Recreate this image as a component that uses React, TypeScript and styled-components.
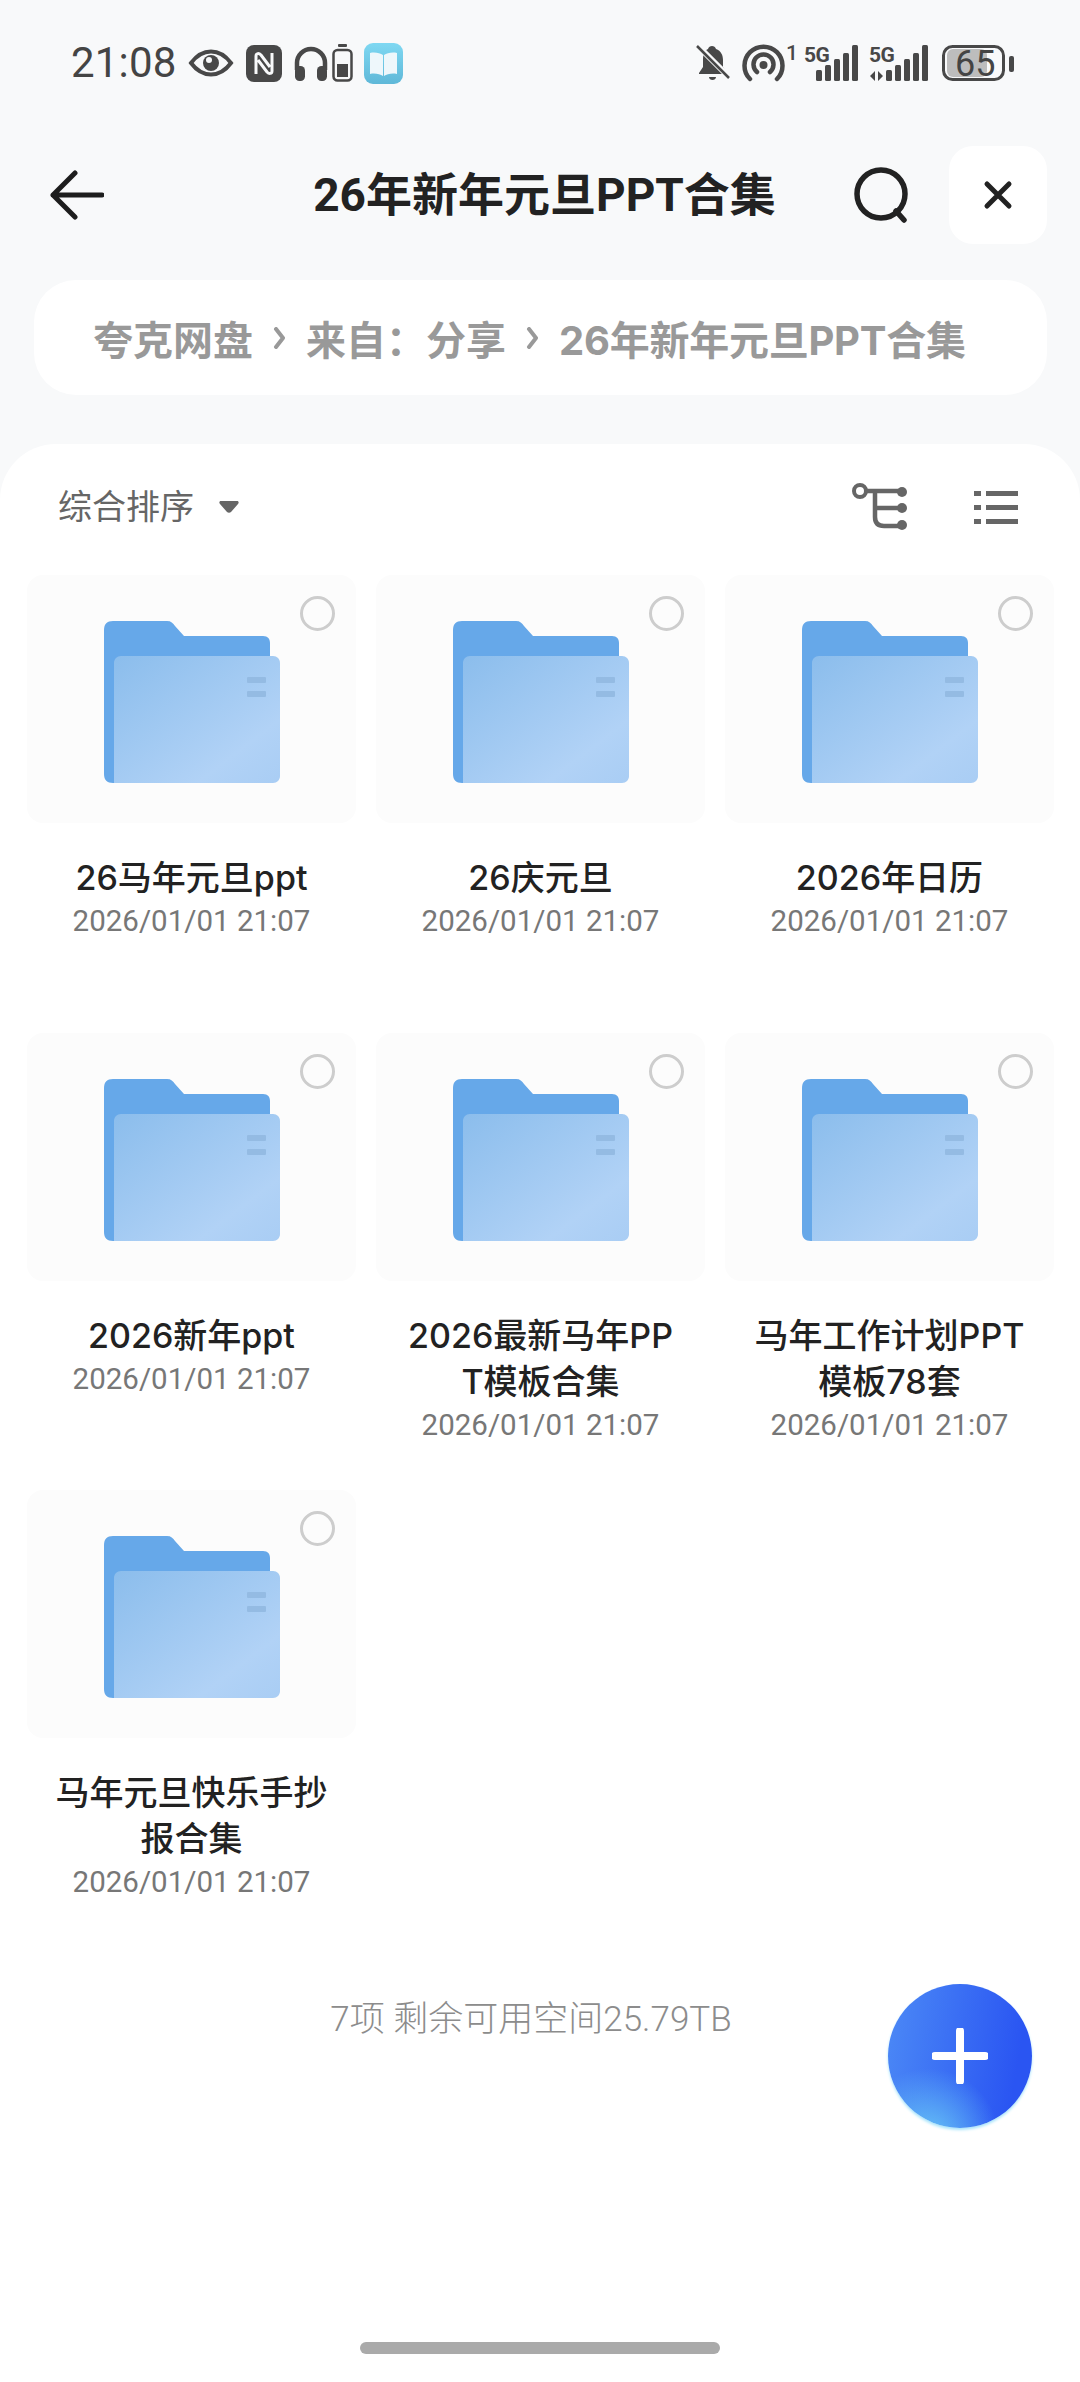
import React from "react";
import styled, { createGlobalStyle } from "styled-components";

const Global = createGlobalStyle`
  html, body { margin: 0; padding: 0; background: #f8f9fa; }
  * { box-sizing: border-box; }
`;

const Page = styled.div`
  position: relative;
  width: 1080px;
  height: 2382px;
  display: flex;
  flex-direction: column;
  overflow: hidden;
  background: #f8f9fa;
  font-family: Roboto, "Noto Sans CJK SC", sans-serif;
`;

const StatusBar = styled.div`
  height: 126px;
  flex: none;
  display: flex;
  align-items: center;
  justify-content: space-between;
  padding: 0 66px 0 71px;
`;

const StatusGroup = styled.div`
  display: flex;
  align-items: center;
`;

const Clock = styled.span`
  font-size: 42px;
  line-height: 48px;
  color: #444;
  letter-spacing: 0.2px;
`;

const StatusIcon = styled.svg<{ $gap?: number }>`
  display: block;
  flex: none;
  overflow: visible;
  margin-left: ${(p) => p.$gap ?? 0}px;
  color: #484848;
`;

const Header = styled.div`
  height: 98px;
  margin-top: 20px;
  flex: none;
  display: grid;
  grid-template-columns: 1fr auto 1fr;
  align-items: center;
  padding: 0 33px 0 42px;
`;

const BackButton = styled.div`
  margin-left: 8px;
  display: flex;
  color: #1d1d1d;
`;

const Title = styled.div`
  font-size: 46px;
  line-height: 60px;
  font-weight: 700;
  color: #222;
  white-space: nowrap;
`;

const HeaderActions = styled.div`
  display: flex;
  justify-content: flex-end;
  align-items: center;
  gap: 39px;
  color: #222;
`;

const CloseButton = styled.div`
  width: 98px;
  height: 98px;
  border-radius: 24px;
  background: #fff;
  display: flex;
  align-items: center;
  justify-content: center;
`;

const Breadcrumb = styled.div`
  height: 115px;
  flex: none;
  margin: 36px 33px 0 34px;
  padding-left: 59px;
  border-radius: 42px;
  background: #fff;
  display: flex;
  align-items: center;
  gap: 20px;
  font-size: 40px;
  font-weight: 700;
  color: #999;
  white-space: nowrap;
`;

const LatinMix = styled.span`
  font-family: Inter, "Noto Sans CJK SC", sans-serif;
  letter-spacing: -0.25px;
`;

const Chevron = styled.svg`
  flex: none;
  color: #999;
`;

const Panel = styled.div`
  flex: 1;
  margin-top: 49px;
  background: #fff;
  border-radius: 56px 56px 0 0;
  display: flex;
  flex-direction: column;
`;

const SortRow = styled.div`
  height: 131px;
  flex: none;
  padding: 0 62px 6px 58px;
  display: flex;
  align-items: center;
  justify-content: space-between;
  color: #666;
`;

const SortLabel = styled.div`
  display: flex;
  align-items: center;
  gap: 25px;
  font-size: 34px;
  line-height: 46px;
  color: #666;
`;

const ViewTools = styled.div`
  display: flex;
  align-items: center;
  gap: 66px;
`;

const Grid = styled.div`
  display: grid;
  grid-template-columns: repeat(3, 329px);
  grid-auto-rows: 457.5px;
  column-gap: 20px;
  padding: 0 0 0 27px;
`;

const Cell = styled.div`
  display: flex;
  flex-direction: column;
  align-items: center;
`;

const Thumb = styled.div`
  position: relative;
  width: 100%;
  height: 248px;
  padding-top: 46px;
  border-radius: 16px;
  background: #fcfcfc;
  display: flex;
  justify-content: center;
`;

const Radio = styled.span`
  position: absolute;
  top: 21px;
  right: 21px;
  width: 35px;
  height: 35px;
  border-radius: 50%;
  border: 3px solid #cdcdcd;
`;

const Name = styled.div`
  width: 275px;
  margin-top: 32px;
  font-family: Inter, "Noto Sans CJK SC", sans-serif;
  font-size: 34px;
  line-height: 46px;
  font-weight: 500;
  color: #222;
  text-align: center;
  word-break: break-all;
`;

const DateText = styled.div`
  margin-top: -2px;
  font-size: 29.500px;
  line-height: 44px;
  color: #777;
  white-space: nowrap;
`;

const Summary = styled.div`
  margin-top: 49px;
  padding-right: 18px;
  text-align: center;
  font-size: 35px;
  line-height: 46px;
  font-weight: 300;
  color: #8c8c8c;
`;

const Fab = styled.div`
  position: absolute;
  left: 888px;
  top: 1984px;
  width: 144px;
  height: 144px;
  border-radius: 50%;
  display: flex;
  align-items: center;
  justify-content: center;
  background:
    radial-gradient(circle at 28% 108%, #68c6f6 0%, rgba(104, 198, 246, 0) 38%),
    linear-gradient(100deg, #4c8af6 0%, #2a55f2 85%);
  box-shadow: 0 2px 3px #a7e4fb;
`;

const HomeBar = styled.div`
  width: 360px;
  height: 12px;
  flex: none;
  margin: auto auto 28px;
  border-radius: 6px;
  background: #aaa;
`;

const FolderIcon = () => {
  const id = React.useId();
  return (
    <svg width="176" height="162" viewBox="0 0 176 162">
      <defs>
        <linearGradient id={id} x1="0" y1="0" x2="1" y2="1">
          <stop offset="0" stopColor="#8bbdec" />
          <stop offset="0.75" stopColor="#b1d2f6" />
          <stop offset="1" stopColor="#a9cdf4" />
        </linearGradient>
      </defs>
      <path
        d="M9 0h54c4 0 6 2 8 5l9 10h79c5 0 7 3 7 7v120c0 12-2 20-10 20H9c-6 0-9-3-9-9V9C0 3 3 0 9 0z"
        fill="#66a8e9"
      />
      <path d="M17 35h152c4 0 7 3 7 7v113c0 4-3 7-7 7H10V42c0-4 3-7 7-7z" fill={`url(#${id})`} />
      <rect x="143" y="56" width="19" height="6" rx="1" fill="#94bbe3" />
      <rect x="143" y="70" width="19" height="6" rx="1" fill="#94bbe3" />
    </svg>
  );
};

const items = [
  "26马年元旦ppt",
  "26庆元旦",
  "2026年日历",
  "2026新年ppt",
  "2026最新马年PPT模板合集",
  "马年工作计划PPT模板78套",
  "马年元旦快乐手抄报合集",
];

const Sep = () => (
  <Chevron width="13" height="22" viewBox="0 0 13 22">
    <path d="M3 2l7 9-7 9" fill="none" stroke="currentColor" strokeWidth="4" strokeLinecap="round" strokeLinejoin="round" />
  </Chevron>
);

const Signal = ({ x }: { x: number }) => (
  <g fill="currentColor">
    {[
      [0, 25, 11],
      [9, 20, 16],
      [18, 14, 22],
      [27, 8, 28],
      [36, 0, 36],
    ].map(([dx, y, h]) => (
      <rect key={dx} x={x + dx} y={y} width="6" height={h} rx="1.5" />
    ))}
  </g>
);

export default function App() {
  return (
    <Page>
      <Global />
      <StatusBar>
        <StatusGroup>
          <Clock>21:08</Clock>
          <StatusIcon $gap={12} width="44" height="28" viewBox="0 0 44 28" fill="none">
            <path d="M2 14C8 6 14 2.500 22 2.500S36 6 42 14c-6 8-12 11.500-20 11.500S8 22 2 14z" stroke="currentColor" strokeWidth="4" />
            <circle cx="22" cy="14" r="8" fill="currentColor" />
            <circle cx="20" cy="11" r="3" fill="#f8f9fa" />
          </StatusIcon>
          <StatusIcon $gap={13} width="36" height="37" viewBox="0 0 36 37">
            <rect width="36" height="37" rx="8" fill="currentColor" />
            <path d="M10 29V11c0-3 3-3 5-1l9 12M26 8v18c0 3-3 3-5 1l-9-12" fill="none" stroke="#f8f9fa" strokeWidth="3" />
          </StatusIcon>
          <StatusIcon $gap={12} width="34" height="35" viewBox="0 0 34 35" fill="none">
            <path d="M3 24V17a14 14 0 0 1 28 0v7" stroke="currentColor" strokeWidth="4.500" />
            <rect x="1" y="20" width="10" height="15" rx="4.500" fill="currentColor" />
            <rect x="23" y="20" width="10" height="15" rx="4.500" fill="currentColor" />
          </StatusIcon>
          <StatusIcon $gap={4} width="21" height="38" viewBox="0 0 21 38" fill="none">
            <rect x="6" y="0" width="9" height="3" rx="1" fill="currentColor" />
            <rect x="1.500" y="6" width="18" height="30.500" rx="4" stroke="currentColor" strokeWidth="2.500" />
            <rect x="5" y="20" width="11" height="13" fill="currentColor" />
          </StatusIcon>
          <StatusIcon $gap={11} width="39" height="41" viewBox="0 0 39 41">
            <defs>
              <linearGradient id="bookBg" x1="0" y1="0" x2="0" y2="1">
                <stop offset="0" stopColor="#7fd8f2" />
                <stop offset="1" stopColor="#5fb8d8" />
              </linearGradient>
            </defs>
            <rect width="39" height="41" rx="9" fill="url(#bookBg)" />
            <path d="M6 10c5-1 10 0 13 2v21c-3-2-8-3-13-2zM33 10c-5-1-10 0-13 2v21c3-2 8-3 13-2z" fill="#eef7fb" />
          </StatusIcon>
        </StatusGroup>
        <StatusGroup>
          <StatusIcon width="34" height="38" viewBox="0 0 34 38">
            <path d="M12 5c1-4 7-4 8 0 5 2 7 6 7 11v7l4 6v1H3v-1l4-6v-7c0-5 1-9 5-11zM13 33h7c0 4-7 4-7 0z" fill="currentColor" />
            <path d="M1 1l32 32" stroke="#f8f9fa" strokeWidth="6" />
            <path d="M1 2l32 32" stroke="currentColor" strokeWidth="2.500" />
          </StatusIcon>
          <StatusIcon $gap={13} width="51" height="36" viewBox="0 0 51 36" fill="none">
            <path d="M7 34a19 19 0 1 1 27 0" stroke="currentColor" strokeWidth="4.500" strokeLinecap="round" />
            <path d="M14 27a10 10 0 1 1 13 0" stroke="currentColor" strokeWidth="4.500" strokeLinecap="round" />
            <circle cx="20.500" cy="20" r="4" fill="currentColor" />
            <text x="43" y="15" fontFamily="Roboto, sans-serif" fontSize="21" fontWeight="500" fill="currentColor">1</text>
          </StatusIcon>
          <StatusIcon $gap={10} width="54" height="36" viewBox="0 0 54 36">
            <text x="0" y="17" fontFamily="Roboto, sans-serif" fontSize="21" fontWeight="700" fill="currentColor" letterSpacing="-0.5">5G</text>
            <Signal x={12} />
          </StatusIcon>
          <StatusIcon $gap={11} width="58" height="36" viewBox="0 0 58 36">
            <text x="0" y="17" fontFamily="Roboto, sans-serif" fontSize="21" fontWeight="700" fill="currentColor" letterSpacing="-0.5">5G</text>
            <path d="M6 26v10l-5-5zM9 26v10l5-5z" fill="currentColor" />
            <Signal x={17} />
          </StatusIcon>
          <StatusIcon $gap={15} width="72" height="36" viewBox="0 0 72 36" fill="none">
            <rect x="5" y="4" width="40" height="28" rx="6" fill="#bdbdbd" />
            <rect x="1.500" y="1.500" width="60" height="33" rx="9" stroke="currentColor" strokeWidth="3" />
            <rect x="67" y="11" width="5" height="16" rx="2" fill="currentColor" />
            <text x="13" y="31" fontFamily="Roboto, sans-serif" fontSize="36" fill="#444">65</text>
          </StatusIcon>
        </StatusGroup>
      </StatusBar>

      <Header>
        <BackButton>
          <svg width="54" height="50" viewBox="0 0 54 50" fill="none">
            <path d="M25 3L3 25l22 22M3 25h49" stroke="currentColor" strokeWidth="5" strokeLinecap="round" strokeLinejoin="round" />
          </svg>
        </BackButton>
        <Title>26年新年元旦PPT合集</Title>
        <HeaderActions>
          <svg width="56" height="56" viewBox="0 0 56 56" fill="none">
            <ellipse cx="27" cy="27" rx="24" ry="24" stroke="currentColor" strokeWidth="5.500" />
            <path d="M42 44l8 9" stroke="currentColor" strokeWidth="5.500" strokeLinecap="round" />
          </svg>
          <CloseButton>
            <svg width="30" height="30" viewBox="0 0 30 30" fill="none">
              <path d="M4 4l22 22M26 4L4 26" stroke="#222" strokeWidth="5" strokeLinecap="round" />
            </svg>
          </CloseButton>
        </HeaderActions>
      </Header>

      <Breadcrumb>
        <span>夸克网盘</span>
        <Sep />
        <span>来自：分享</span>
        <Sep />
        <LatinMix>26年新年元旦PPT合集</LatinMix>
      </Breadcrumb>

      <Panel>
        <SortRow>
          <SortLabel>
            综合排序
            <svg width="20" height="14" viewBox="0 0 20 14">
              <path d="M2 1h16c2 0 2 2 1 3l-7 8c-1 1-3 1-4 0L1 4C0 3 0 1 2 1z" fill="#666" />
            </svg>
          </SortLabel>
          <ViewTools>
            <svg width="56" height="48" viewBox="0 0 56 48" fill="none">
              <circle cx="8" cy="8" r="6" stroke="#666" strokeWidth="4" />
              <path d="M13 8h35M23 8v26c0 6 3 9 9 9h16M23 25h25" stroke="#666" strokeWidth="4.500" />
              <circle cx="50" cy="9" r="5" fill="#666" />
              <circle cx="50" cy="25" r="5" fill="#666" />
              <circle cx="50" cy="42" r="5" fill="#666" />
            </svg>
            <svg width="44" height="34" viewBox="0 0 44 34" fill="#666">
              <rect x="0" y="1" width="7" height="5" />
              <rect x="12" y="1" width="32" height="5" />
              <rect x="0" y="15" width="7" height="5" />
              <rect x="12" y="15" width="32" height="5" />
              <rect x="0" y="29" width="7" height="5" />
              <rect x="12" y="29" width="32" height="5" />
            </svg>
          </ViewTools>
        </SortRow>
        <Grid>
          {items.map((name) => (
            <Cell key={name}>
              <Thumb>
                <div>
                  <FolderIcon />
                </div>
                <Radio />
              </Thumb>
              <Name>{name}</Name>
              <DateText>2026/01/01 21:07</DateText>
            </Cell>
          ))}
        </Grid>
        <Summary>7项 剩余可用空间25.79TB</Summary>
        <HomeBar />
      </Panel>

      <Fab>
        <svg width="56" height="56" viewBox="0 0 56 56">
          <path d="M28 3v50M3 28h50" stroke="#fff" strokeWidth="8" strokeLinecap="round" />
        </svg>
      </Fab>
    </Page>
  );
}
